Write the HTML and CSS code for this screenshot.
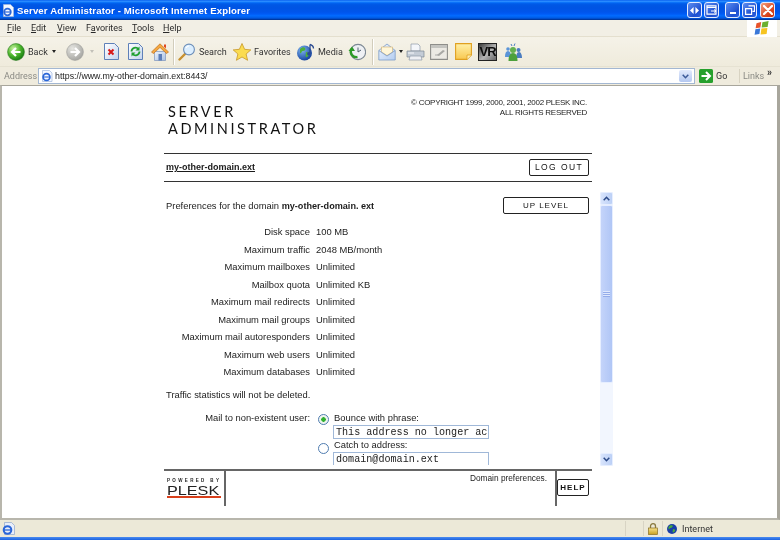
FILE: index.html
```html
<!DOCTYPE html>
<html lang="en">
<head>
<meta charset="utf-8">
<title>Server Administrator - Microsoft Internet Explorer</title>
<link rel="stylesheet" href="styles.css">
</head>
<body>
<div class="window">
  <svg class="defs" width="0" height="0" aria-hidden="true">
    <defs>
      <radialGradient id="gGreen" cx="35%" cy="30%" r="75%"><stop offset="0" stop-color="#c8f2a0"/><stop offset=".55" stop-color="#4cb52c"/><stop offset="1" stop-color="#157a12"/></radialGradient>
      <radialGradient id="gGrey" cx="35%" cy="30%" r="75%"><stop offset="0" stop-color="#e6e6e2"/><stop offset="1" stop-color="#a4a4a0"/></radialGradient>
      <radialGradient id="gGlobe" cx="35%" cy="30%" r="75%"><stop offset="0" stop-color="#7fb6f0"/><stop offset="1" stop-color="#123f9c"/></radialGradient>
      <linearGradient id="gPage" x1="0" y1="0" x2="1" y2="1"><stop offset="0" stop-color="#fff"/><stop offset="1" stop-color="#c4d4ee"/></linearGradient>
      <linearGradient id="gNote" x1="0" y1="0" x2="0" y2="1"><stop offset="0" stop-color="#fff0a8"/><stop offset="1" stop-color="#f8c850"/></linearGradient>
      <linearGradient id="gLock" x1="0" y1="0" x2="0" y2="1"><stop offset="0" stop-color="#f6e08a"/><stop offset="1" stop-color="#c8a020"/></linearGradient>
      <linearGradient id="gHouse" x1="0" y1="0" x2="1" y2="1"><stop offset="0" stop-color="#eef4fc"/><stop offset="1" stop-color="#a8c0e4"/></linearGradient>
      <linearGradient id="gMail" x1="0" y1="0" x2="1" y2="1"><stop offset="0" stop-color="#eef5ff"/><stop offset="1" stop-color="#b4cdf0"/></linearGradient>
    </defs>
  </svg>

  <header class="titlebar">
    <svg class="title-icon" width="11" height="13" viewBox="0 0 11 13"><path d="M.5.5h7l3 3v9H.5z" fill="#f4f7ff" stroke="#9fb6dc" stroke-width=".8"/><circle cx="4.500" cy="8" r="3.300" fill="none" stroke="#2a66d8" stroke-width="1.700"/><path d="M1.500 8h6" stroke="#2a66d8" stroke-width="1.200"/></svg>
    <span class="title-text">Server Administrator - Microsoft Internet Explorer</span>
    <div class="win-buttons">
      <span class="wbtn wbtn-a"><svg width="9" height="7" viewBox="0 0 9 7"><path d="M3.600 0v7L0 3.500zM5.400 0v7L9 3.500z" fill="#fff"/></svg></span>
      <span class="wbtn wbtn-b"><svg width="11" height="10" viewBox="0 0 11 10"><path d="M1 .8h9v8.400H1zM1 2.500h9" fill="none" stroke="#fff" stroke-width="1.200"/><path d="M5 6h5M8 4.500 10 6 8 7.500" fill="none" stroke="#fff"/></svg></span>
      <span class="wbtn wbtn-c"><span class="min-bar"></span></span>
      <span class="wbtn wbtn-d"><svg width="10" height="10" viewBox="0 0 10 10"><path d="M3.500.8h6v5.500h-2M.6 3.600h6v5.800h-6z" fill="none" stroke="#fff" stroke-width="1.200"/></svg></span>
      <span class="wbtn wbtn-x"><svg width="10" height="10" viewBox="0 0 10 10"><path d="M1 1l8 8M9 1 1 9" stroke="#fff" stroke-width="2.200" stroke-linecap="round"/></svg></span>
    </div>
  </header>

  <nav class="menubar">
    <span class="menu m-file"><u>F</u>ile</span>
    <span class="menu m-edit"><u>E</u>dit</span>
    <span class="menu m-view"><u>V</u>iew</span>
    <span class="menu m-fav">F<u>a</u>vorites</span>
    <span class="menu m-tools"><u>T</u>ools</span>
    <span class="menu m-help"><u>H</u>elp</span>
    <span class="xp-flag">
      <svg width="16" height="15" viewBox="0 0 16 15"><path d="M2.500 2.200 7.200 1 6.400 6.600 1.600 7.200z" fill="#e8532b"/><path d="M8.400 1.200 14.600 0 13.600 6 7.600 6.500z" fill="#6cb030"/><path d="M1.400 8.200 6.200 7.600 5.400 13 .6 13.800z" fill="#3a78d8"/><path d="M7.400 7.500 13.400 7 12.600 13 6.600 13.600z" fill="#f6c420"/></svg>
    </span>
  </nav>

  <div class="toolbar">
    <span class="tgroup t-back ml7">
      <svg width="18" height="18" viewBox="0 0 18 18"><circle cx="9" cy="9" r="8.400" fill="url(#gGreen)" stroke="#2c7a20" stroke-width=".6"/><path d="M13.500 9H6M9 5 5 9l4 4" fill="none" stroke="#fff" stroke-width="2.200"/></svg>
      <span class="tlabel">Back</span>
    </span>
    <span class="caret"></span>
    <svg class="ml10" width="18" height="18" viewBox="0 0 18 18"><circle cx="9" cy="9" r="8.400" fill="url(#gGrey)" stroke="#a0a09c" stroke-width=".6"/><path d="M4.500 9H12M9 5l4 4-4 4" fill="none" stroke="#fff" stroke-width="2.200"/></svg>
    <span class="caret caret-off ml6"></span>
    <svg class="ml10" width="15" height="17" viewBox="0 0 15 17"><path d="M.5.5h10l4 4v12H.5z" fill="url(#gPage)" stroke="#5e80b8"/><path d="M4.500 6.500l5 5M9.500 6.500l-5 5" stroke="#d81818" stroke-width="2"/></svg>
    <svg class="ml9" width="15" height="17" viewBox="0 0 15 17"><path d="M.5.5h10l4 4v12H.5z" fill="url(#gPage)" stroke="#5e80b8"/><path d="M3.500 8.500a4 4 0 0 1 7-2.500" fill="none" stroke="#20a030" stroke-width="1.800"/><path d="M11.500 8.500a4 4 0 0 1-7 2.500" fill="none" stroke="#20a030" stroke-width="1.800"/><path d="M11.500 3.500v4h-4zM3.500 13.500v-4h4z" fill="#20a030"/></svg>
    <svg class="ml8" width="18" height="18" viewBox="0 0 18 18"><path d="M3.500 8.500v9h11v-9z" fill="url(#gHouse)" stroke="#7c94bc" stroke-width=".7"/><path d="M.5 9 9 .8 17.500 9 15.500 10.500 9 4.400 2.500 10.500z" fill="#f4a840" stroke="#c07020" stroke-width=".7"/><path d="M7.500 11h3.500v6.500H7.500z" fill="#5a7cb8"/><path d="M13 1.500h2v4l-2-2z" fill="#e04820"/></svg>
    <span class="sep ml4"></span>
    <span class="tgroup t-search ml3">
      <svg width="18" height="18" viewBox="0 0 18 18"><path d="M7 11 1.500 16.500" stroke="#c89030" stroke-width="2.400" stroke-linecap="round"/><circle cx="11" cy="6.500" r="5.400" fill="#dbeeff" stroke="#6c8eb8" stroke-width="1.100"/><path d="M8 5a3.400 3.400 0 0 1 3-2" fill="none" stroke="#fff" stroke-width="1.200"/></svg>
      <span class="tlabel">Search</span>
    </span>
    <span class="tgroup t-fav ml7">
      <svg width="18" height="18" viewBox="0 0 18 18"><path d="M9 .5l2.600 5.800 6.200.6-4.700 4.100 1.500 6.300L9 14l-5.600 3.300 1.500-6.300L.2 6.900l6.200-.6z" fill="#fbdc50" stroke="#c89828" stroke-width=".8"/></svg>
      <span class="tlabel">Favorites</span>
    </span>
    <span class="tgroup t-media ml9">
      <svg width="18" height="18" viewBox="0 0 18 18"><circle cx="7.500" cy="10" r="7.500" fill="url(#gGlobe)"/><path d="M3 6c2-2 4-2 5-1s0 3-2 3-1 3-3 2zM9 9c2 0 3 1 3 2s-2 4-3 3 0-3 0-5z" fill="#4cae3c"/><path d="M13 1.500v9" stroke="#2a4a90" stroke-width="1.300"/><path d="M13 1.500c2 .5 3.500 2 3.500 4" fill="none" stroke="#2a4a90" stroke-width="1.300"/><circle cx="11.800" cy="10.800" r="1.700" fill="#2a4a90"/></svg>
      <span class="tlabel">Media</span>
    </span>
    <svg class="ml9" width="18" height="18" viewBox="0 0 18 18"><circle cx="10" cy="9" r="7.600" fill="#eef0f4" stroke="#7c8894" stroke-width="1.100"/><path d="M10 4.500V9l3-2" fill="none" stroke="#506070" stroke-width="1"/><path d="M9.500 14A5.500 5.500 0 0 1 3.500 6" fill="none" stroke="#2c9a28" stroke-width="2.400"/><path d="M.5 8 4 3.500 7 8z" fill="#2c9a28"/></svg>
    <span class="sep ml6"></span>
    <svg class="ml4" width="18" height="18" viewBox="0 0 18 18"><path d="M.8 7.500 9 1l8.200 6.500v9.500H.8z" fill="url(#gMail)" stroke="#7c9cc8" stroke-width=".8"/><path d="M3.500 9V4h11v5L9 12.500z" fill="#fff6d8" stroke="#d0b070" stroke-width=".6"/><path d="M.8 7.500 9 13l8.200-5.500" fill="none" stroke="#7c9cc8" stroke-width=".8"/></svg>
    <span class="caret ml3"></span>
    <svg class="ml3" width="19" height="18" viewBox="0 0 19 18"><path d="M5 1h7l2 2v5H5z" fill="#f4f6fa" stroke="#8c98a8" stroke-width=".7"/><path d="M1 8h17v6H1z" fill="#c4ccd6" stroke="#7c8894" stroke-width=".7"/><path d="M4 13h11l1 4H3z" fill="#eef0f4" stroke="#8c98a8" stroke-width=".7"/><path d="M2 10h6" stroke="#f4f6fa" stroke-width="1"/></svg>
    <svg class="ml5" width="18" height="16" viewBox="0 0 18 16"><path d="M.6.600h16.800v14.800H.6z" fill="#eceae4" stroke="#8e8e8a" stroke-width="1.100"/><path d="M1 1h16v3H1z" fill="#c4c4c0"/><path d="M5 11h4" stroke="#aaa" stroke-width="1"/><path d="M7 11l6-5 2 1-6 5z" fill="#a8a8a4"/></svg>
    <svg class="ml7" width="17" height="17" viewBox="0 0 17 17"><path d="M.6.600h15.800v11.400l-4.400 4.400H.6z" fill="url(#gNote)" stroke="#e0a020" stroke-width="1.100"/><path d="M12 16.400v-4.400h4.400" fill="#fff0b0" stroke="#e0a020" stroke-width=".8"/></svg>
    <span class="vr ml6">VR</span>
    <svg class="ml7" width="18" height="18" viewBox="0 0 18 18"><circle cx="4" cy="6" r="1.800" fill="#5a94d8"/><path d="M1 14c0-4 1-6 3-6s3 2 3 6z" fill="#5a94d8"/><circle cx="14.500" cy="7" r="2" fill="#4a7cc0"/><path d="M12 15c0-3 1-6 3-6s3 3 3 6z" fill="#4a7cc0"/><circle cx="9" cy="7" r="3" fill="#64b050"/><path d="M4.500 18c0-5 1.500-8 4.500-8s4.500 3 4.500 8z" fill="#4ca03c"/><path d="M7 1l1 2M11 .5l-1 2.500" stroke="#4a7cc0"/></svg>
  </div>

  <div class="addressbar">
    <span class="addr-label">Address</span>
    <div class="addr-field">
      <svg width="12" height="12" viewBox="0 0 12 12"><path d="M1.500.5h7l2.500 2.500v8.500H1.500z" fill="#f4f7ff" stroke="#9fb6dc" stroke-width=".7"/><circle cx="5.500" cy="7" r="3.400" fill="none" stroke="#2a66d8" stroke-width="1.700"/><path d="M2.500 7h6" stroke="#2a66d8" stroke-width="1.100"/></svg>
      <span class="addr-url">https://www.my-other-domain.ext:8443/</span>
      <span class="addr-drop"><svg width="7" height="5" viewBox="0 0 7 5"><path d="M.7.700 3.500 3.700 6.300.7" fill="none" stroke="#3c5a98" stroke-width="1.500"/></svg></span>
    </div>
    <svg class="go-icon" width="14" height="14" viewBox="0 0 14 14"><rect width="14" height="14" rx="1.500" fill="#26a02c"/><path d="M2.500 7h8M7 3l4 4-4 4" fill="none" stroke="#fff" stroke-width="2"/></svg>
    <span class="go-label">Go</span>
    <span class="links-sep"></span>
    <span class="links-label">Links</span>
    <span class="links-more">»</span>
  </div>

  <main class="viewport">
    <div class="panel">
      <div class="brand">
        <div class="brand-name">SERVER<br>ADMINISTRATOR</div>
        <div class="copyright">© COPYRIGHT 1999, 2000, 2001, 2002 PLESK INC.<br>ALL RIGHTS RESERVED</div>
      </div>
      <div class="domainbar">
        <a class="domain-link">my-other-domain.ext</a>
        <span class="plesk-btn btn-logout">LOG OUT</span>
      </div>

      <div class="frame">
        <div class="frame-main">
          <div class="pref-head">
            <span>Preferences for the domain <b>my-other-domain. ext</b></span>
            <span class="plesk-btn btn-up">UP LEVEL</span>
          </div>
          <div class="limits">
            <span class="lab">Disk space</span><span>100 MB</span>
            <span class="lab">Maximum traffic</span><span>2048 MB/month</span>
            <span class="lab">Maximum mailboxes</span><span>Unlimited</span>
            <span class="lab">Mailbox quota</span><span>Unlimited KB</span>
            <span class="lab">Maximum mail redirects</span><span>Unlimited</span>
            <span class="lab">Maximum mail groups</span><span>Unlimited</span>
            <span class="lab">Maximum mail autoresponders</span><span>Unlimited</span>
            <span class="lab">Maximum web users</span><span>Unlimited</span>
            <span class="lab">Maximum databases</span><span>Unlimited</span>
          </div>
          <p class="traffic">Traffic statistics will not be deleted.</p>
          <div class="mailopts">
            <span class="lab mail-lab">Mail to non-existent user:</span>
            <div class="mail-col">
              <div class="opt"><span class="radio radio-on"></span><span>Bounce with phrase:</span></div>
              <div class="fakeinput">This address no longer ac</div>
              <div class="opt opt-2"><span class="radio"></span><span>Catch to address:</span></div>
              <div class="fakeinput">domain@domain.ext</div>
            </div>
          </div>
        </div>
        <div class="scrollbar">
          <span class="sb-btn"><svg width="7" height="5" viewBox="0 0 7 5"><path d="M.7 4.300 3.500 1.300 6.300 4.300" fill="none" stroke="#2c4a88" stroke-width="1.500"/></svg></span>
          <div class="sb-track">
            <div class="sb-thumb"><span class="sb-grip"></span></div>
          </div>
          <span class="sb-btn"><svg width="7" height="5" viewBox="0 0 7 5"><path d="M.7.700 3.500 3.700 6.300.7" fill="none" stroke="#2c4a88" stroke-width="1.500"/></svg></span>
        </div>
      </div>

      <footer class="panel-foot">
        <div class="plesk-logo">
          <span class="powered">POWERED BY</span>
          <span class="plesk-word">PLESK</span>
        </div>
        <div class="foot-note">Domain preferences.</div>
        <div class="foot-help"><span class="plesk-btn btn-help">HELP</span></div>
      </footer>
    </div>
  </main>

  <footer class="statusbar">
    <svg class="st-ie" width="13" height="13" viewBox="0 0 13 13"><path d="M2.500.5h7l3 3v9h-10z" fill="#e8eefa" stroke="#8ea6cc" stroke-width=".7"/><circle cx="5.500" cy="8" r="3.800" fill="none" stroke="#2a66d8" stroke-width="2"/><path d="M2 8h7" stroke="#2a66d8" stroke-width="1.300"/></svg>
    <span class="st-fill"></span>
    <span class="st-cell st-a"></span>
    <span class="st-cell st-lock"><svg width="10" height="12" viewBox="0 0 10 12"><path d="M2.500 5V3.200a2.500 2.500 0 0 1 5 0V5" fill="none" stroke="#8a7a40" stroke-width="1.300"/><rect x=".5" y="5" width="9" height="6.500" fill="url(#gLock)" stroke="#8a7020" stroke-width=".7"/></svg></span>
    <span class="st-cell st-zone"><svg width="10" height="10" viewBox="0 0 10 10"><circle cx="5" cy="5" r="5" fill="#1a3fa8"/><path d="M1.500 3c1-2 3-2 4-1.500S5 4 3.500 4 3 6 1.500 5zM6 5c2 0 2.500 1 2 2S6 9 5.500 8z" fill="#48a83c"/></svg><span class="zone-text">Internet</span></span>
  </footer>
  <div class="taskedge"></div>
</div>
</body>
</html>
```

FILE: styles.css
```css
* { box-sizing: border-box; }

html, body {
  margin: 0;
  padding: 0;
  height: 540px;
  overflow: hidden;
}

body {
  font-family: "Liberation Sans", Arial, sans-serif;
  color: #222;
  background: #fff;
}

.window {
  width: 780px;
  height: 540px;
  display: flex;
  flex-direction: column;
  filter: blur(.35px);
}

.defs { position: absolute; }

.ml3 { margin-left: 3px; }
.ml4 { margin-left: 4px; }
.ml5 { margin-left: 5px; }
.ml6 { margin-left: 6px; }
.ml7 { margin-left: 7px; }
.ml8 { margin-left: 8px; }
.ml9 { margin-left: 9px; }
.ml10 { margin-left: 10px; }

/* title bar */
.titlebar {
  height: 20px;
  flex: none;
  display: flex;
  align-items: center;
  padding: 0 5px 0 3px;
  background: linear-gradient(180deg, #0058ee 0, #3593ff 6%, #127dff 10%, #0262ee 16%, #0057e5 24%, #0054e3 40%, #0055eb 60%, #005bf5 70%, #026afe 78%, #0062ef 86%, #0052d6 92%, #0040ab 95%, #003092 100%);
}

.title-icon { flex: none; }

.title-text {
  margin-left: 3px;
  font-size: 9.6px;
  font-weight: 700;
  letter-spacing: .14px;
  color: #fff;
  white-space: nowrap;
}

.win-buttons {
  margin-left: auto;
  display: flex;
}

.wbtn {
  width: 15px;
  height: 16px;
  display: flex;
  align-items: center;
  justify-content: center;
  border: 1px solid #e4ecff;
  border-radius: 3px;
  background: linear-gradient(135deg, #5c8cf0, #1e50d0 70%, #2a60e0);
}

.wbtn-b, .wbtn-d { margin-left: 2px; }
.wbtn-c { margin-left: 6px; }
.wbtn-x { margin-left: 3px; background: linear-gradient(135deg, #f0a080, #d84018 70%, #c83410); }

.min-bar {
  width: 6px;
  height: 2px;
  margin-top: 6px;
  background: #fff;
}

/* menu bar */
.menubar {
  height: 17px;
  flex: none;
  display: flex;
  align-items: center;
  padding-left: 7px;
  font-family: Roboto, "Liberation Sans", sans-serif;
  font-size: 9px;
  color: #2a2a2a;
  background: #f2efe5;
  border-bottom: 1px solid #e4dfce;
}

.menu { white-space: nowrap; }
.m-file { width: 24px; }
.m-edit { width: 26px; }
.m-view { width: 29px; }
.m-fav { width: 46px; }
.m-tools { width: 31px; }
.m-help { width: 20px; }

.xp-flag {
  margin-left: auto;
  margin-right: 3px;
  width: 30px;
  height: 17px;
  display: flex;
  align-items: center;
  justify-content: center;
  background: #fff;
}

/* toolbar */
.toolbar {
  height: 30px;
  flex: none;
  display: flex;
  align-items: center;
  background: linear-gradient(180deg, #f5f2e8, #efebdc);
  border-bottom: 1px solid #e6e2d2;
}

.toolbar > * { flex: none; }
.toolbar svg { flex: none; }

.tgroup {
  display: flex;
  align-items: center;
  gap: 3px;
}

.t-back { width: 45px; }
.t-search { width: 48px; }
.t-fav { width: 55px; }
.t-media { width: 42px; }

.tlabel {
  font-family: Roboto, "Liberation Sans", sans-serif;
  font-size: 9px;
  color: #333;
  white-space: nowrap;
}

.caret {
  width: 0;
  height: 0;
  border-left: 2.5px solid transparent;
  border-right: 2.5px solid transparent;
  border-top: 3px solid #222;
}

.caret-off { border-top-color: #c2c0b8; }

.sep {
  width: 2px;
  height: 26px;
  border-left: 1px solid #d2cdbc;
  border-right: 1px solid #fff;
}

.vr {
  width: 19px;
  height: 18px;
  display: flex;
  align-items: center;
  justify-content: center;
  font-size: 13px;
  font-weight: 700;
  letter-spacing: -1px;
  color: #0c0c0c;
  background: linear-gradient(135deg, #3a3a3a, #b4b4b4 55%, #666);
  border: 1px solid #222;
}

/* address bar */
.addressbar {
  height: 18px;
  flex: none;
  display: flex;
  align-items: center;
  font-family: Roboto, "Liberation Sans", sans-serif;
  background: #efebdd;
}

.addr-label {
  width: 38px;
  padding-left: 4px;
  font-size: 9px;
  color: #8a8a84;
}

.addr-field {
  width: 657px;
  height: 16px;
  display: flex;
  align-items: center;
  padding: 0 2px;
  background: #fff;
  border: 1px solid #a3b7d2;
}

.addr-url {
  margin-left: 2px;
  font-family: "Liberation Sans", sans-serif;
  font-size: 8.8px;
  color: #222;
}

.addr-drop {
  margin-left: auto;
  width: 13px;
  height: 12px;
  display: flex;
  align-items: center;
  justify-content: center;
  background: linear-gradient(180deg, #e2eafc, #b4c8f0);
  border-radius: 2px;
}

.go-icon { margin-left: 4px; flex: none; }

.go-label {
  margin-left: 3px;
  width: 23px;
  font-size: 9px;
  color: #333;
}

.links-sep {
  width: 1px;
  height: 14px;
  background: #d8d3c2;
}

.links-label {
  margin-left: 3px;
  width: 24px;
  font-size: 9px;
  color: #8a8a84;
}

.links-more {
  font-size: 10px;
  font-weight: 700;
  line-height: 10px;
  margin-top: -6px;
  color: #333;
}

/* page viewport */
.viewport {
  flex: 1;
  min-height: 0;
  background: #fff;
  border-top: 1px solid #a8a69c;
  border-left: 2px solid #b8b6ac;
  border-right: 3px solid #a8a69c;
  border-bottom: 2px solid #b8b6ac;
  padding-left: 162px;
  overflow: hidden;
}

.panel { width: 450px; }

.brand {
  width: 428px;
  height: 68px;
  display: flex;
  justify-content: space-between;
  align-items: flex-start;
  padding: 17px 5px 0 4px;
  border-bottom: 1px solid #333;
}

.brand-name {
  font-family: Lato, "Liberation Sans", sans-serif;
  font-size: 14.5px;
  line-height: 17px;
  letter-spacing: 2.6px;
  color: #111;
}

.copyright {
  margin-top: -5px;
  font-size: 8px;
  line-height: 10px;
  letter-spacing: -.28px;
  text-align: right;
  color: #222;
}

.domainbar {
  width: 428px;
  height: 28px;
  display: flex;
  align-items: center;
  justify-content: space-between;
  padding: 0 3px 1px 2px;
  border-bottom: 1px solid #333;
}

.domain-link {
  font-size: 9px;
  font-weight: 700;
  text-decoration: underline;
  color: #1a1a1a;
}

.plesk-btn {
  display: flex;
  align-items: center;
  justify-content: center;
  height: 17px;
  font-size: 8px;
  letter-spacing: 1.6px;
  color: #111;
  background: #fff;
  border: 1px solid #222;
  border-radius: 2px;
}

.btn-logout { width: 60px; font-size: 8.5px; letter-spacing: 1.4px; }
.btn-up { width: 86px; letter-spacing: 1px; }
.btn-help { width: 32px; font-weight: 700; letter-spacing: 1px; }

/* frame with scrollbar */
.frame {
  height: 284px;
  display: flex;
  font-size: 9.4px;
  color: #1c1c1c;
}

.frame-main {
  width: 436px;
  height: 283px;
  overflow: hidden;
  padding-left: 2px;
}

.pref-head {
  width: 423px;
  height: 33px;
  padding-top: 14px;
  display: flex;
  justify-content: space-between;
  align-items: center;
}

.pref-head b {
  font-size: 9.1px;
  font-weight: 700;
}

.limits {
  display: grid;
  grid-template-columns: 144px 1fr;
  grid-auto-rows: 17.5px;
  column-gap: 6px;
  align-items: center;
  margin-top: 8px;
}

.lab { text-align: right; }

.traffic {
  margin: 7px 0 0;
  height: 14px;
  line-height: 14px;
}

.mailopts {
  margin-top: 10px;
  display: grid;
  grid-template-columns: 144px 1fr;
  column-gap: 6px;
}

.mail-lab { line-height: 12px; }

.mail-col { margin-left: 1px; }

.opt {
  height: 12px;
  display: flex;
  align-items: center;
  gap: 5px;
  line-height: 12px;
  margin-left: 1px;
}

.radio {
  width: 11px;
  height: 11px;
  flex: none;
  margin-top: 3px;
  border: 1px solid #4f7cb0;
  border-radius: 50%;
  background: #fff;
}

.opt-2 .radio { margin-top: 7px; }

.radio-on {
  background: radial-gradient(circle, #30b030 0 2px, #e8f0e8 2.5px, #fff 100%);
}

.fakeinput {
  width: 156px;
  height: 14px;
  margin-left: 16px;
  margin-top: 1px;
  padding: 0 2px;
  font-family: "Liberation Mono", "Courier New", monospace;
  font-size: 10.1px;
  line-height: 13px;
  white-space: nowrap;
  overflow: hidden;
  color: #222;
  background: #fff;
  border: 1px solid #a0b8d8;
}

.scrollbar {
  width: 13px;
  margin-top: 10px;
  display: flex;
  flex-direction: column;
  background: #f2f6fe;
}

.sb-btn {
  height: 13px;
  flex: none;
  display: flex;
  align-items: center;
  justify-content: center;
  background: linear-gradient(90deg, #d8e4fc, #bcd0f6);
  border: 1px solid #e6eeff;
  border-radius: 2px;
}

.sb-track { flex: 1; min-height: 0; }

.sb-thumb {
  height: 178px;
  display: flex;
  align-items: center;
  justify-content: center;
  background: linear-gradient(90deg, #c4d4fa, #b0c6f6);
  border: 1px solid #e6eeff;
  border-radius: 2px;
}

.sb-grip {
  width: 7px;
  height: 6px;
  background: repeating-linear-gradient(180deg, #dfe8fd 0 1px, #94acea 1px 2px);
}

/* footer of the panel */
.panel-foot {
  width: 428px;
  height: 37px;
  margin-top: 3px;
  display: flex;
  border-top: 2px solid #666;
}

.plesk-logo {
  width: 62px;
  display: flex;
  flex-direction: column;
  padding: 7px 0 0 3px;
  border-right: 2px solid #666;
}

.powered {
  font-size: 4.5px;
  font-weight: 700;
  line-height: 6px;
  letter-spacing: 2.35px;
  white-space: nowrap;
  color: #222;
}

.plesk-word {
  width: 40px;
  margin-top: 2px;
  font-size: 12px;
  line-height: 10px;
  color: #222;
  border-bottom: 2px solid #d8401c;
  transform: scaleX(1.35);
  transform-origin: left top;
}

.foot-note {
  flex: 1;
  padding: 1px 8px 0 0;
  text-align: right;
  font-size: 8.3px;
  line-height: 12px;
  color: #222;
}

.foot-help {
  width: 37px;
  padding: 8px 0 0;
  border-left: 2px solid #666;
}

/* status bar */
.statusbar {
  height: 17px;
  flex: none;
  display: flex;
  align-items: center;
  padding-left: 2px;
  background: #ece9d8;
}

.st-fill { flex: 1; }

.st-cell {
  height: 15px;
  display: flex;
  align-items: center;
  border-left: 1px solid #d8d4c4;
}

.st-a { width: 18px; }
.st-lock { width: 19px; justify-content: center; }
.st-zone { width: 118px; padding-left: 4px; }

.zone-text {
  margin-left: 5px;
  font-family: Roboto, "Liberation Sans", sans-serif;
  font-size: 9px;
  color: #333;
}

.taskedge {
  height: 3px;
  flex: none;
  background: linear-gradient(180deg, #4b8cf0, #1a62e0);
}
```
